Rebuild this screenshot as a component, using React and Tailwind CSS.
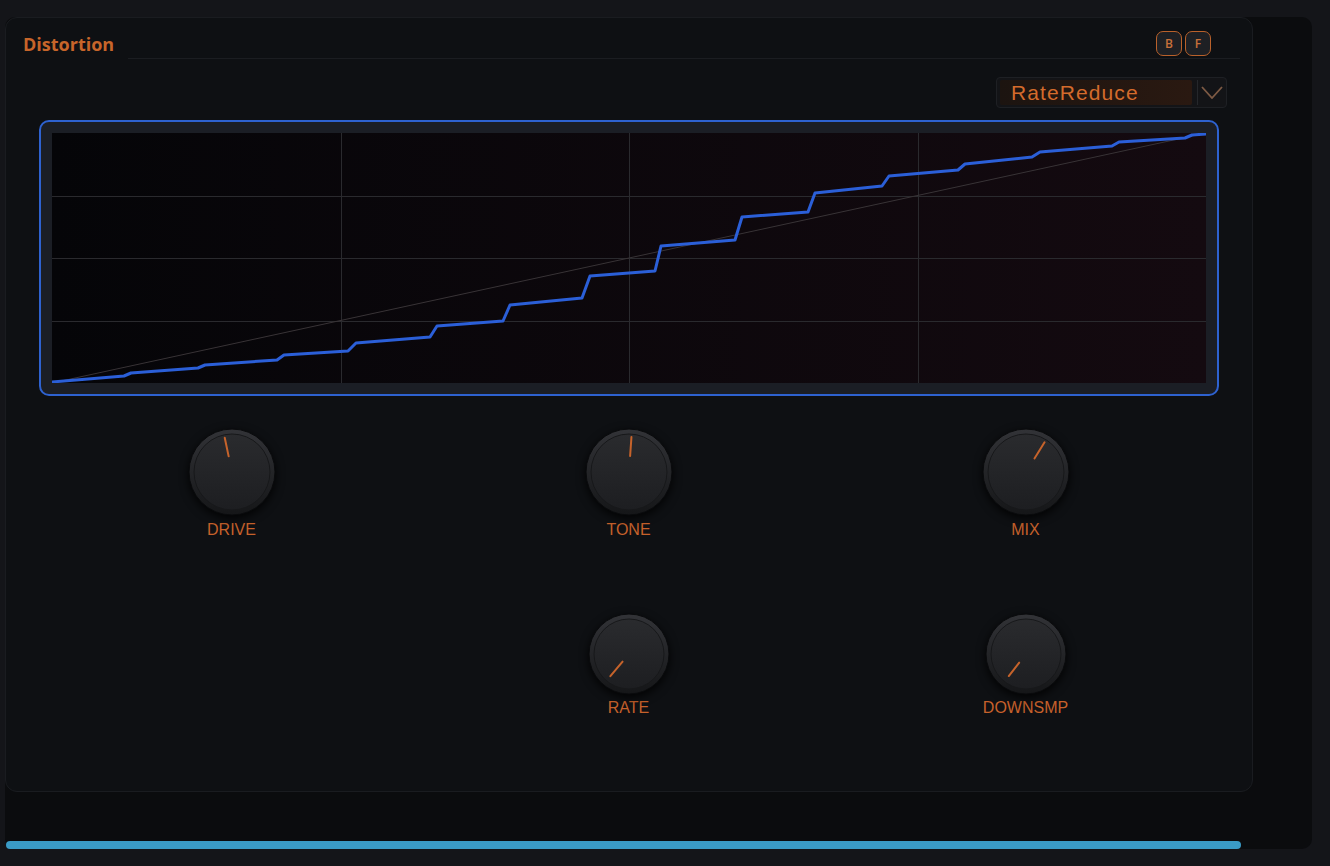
import React from 'react';

const ORANGE = '#c6632b';

// staircase transfer curve, in page pixels (plot starts at 52,133)
const STEPS = [
  [52, 382], [124, 376], [131, 373], [198, 368], [205, 365], [277, 360], [284, 355],
  [348, 351], [356, 343], [430, 337], [437, 326], [503, 321], [510, 305],
  [582, 298], [590, 276], [655, 271], [661, 246], [735, 240], [742, 217],
  [808, 212], [815, 193], [882, 186], [889, 176], [958, 170], [965, 164],
  [1032, 157], [1040, 152], [1112, 146], [1119, 142], [1185, 138], [1192, 135],
  [1206, 134],
];

const W = 1154;
const H = 250;

function TransferGraph() {
  const pts = STEPS.map(([x, y]) => `${x - 52},${y - 133}`).join(' ');
  return (
    <svg width={W} height={H} className="block">
      <defs>
        <linearGradient id="plotbg" x1="0" y1="0" x2="1" y2="0">
          <stop offset="0" stopColor="#050508" />
          <stop offset="1" stopColor="#140a10" />
        </linearGradient>
      </defs>
      <rect width={W} height={H} fill="url(#plotbg)" />
      {[1, 2, 3].map((i) => (
        <g key={i} stroke="#2a2a2e" strokeWidth="1">
          <line x1={Math.round((W * i) / 4) + 0.5} y1="0" x2={Math.round((W * i) / 4) + 0.5} y2={H} />
          <line x1="0" y1={Math.round((H * i) / 4) + 0.5} x2={W} y2={Math.round((H * i) / 4) + 0.5} />
        </g>
      ))}
      <line x1="0" y1={H} x2={W} y2="0" stroke="#383336" strokeWidth="1" />
      <polyline points={pts} fill="none" stroke="#2b5fd8" strokeWidth="3" strokeLinejoin="round" strokeLinecap="round" />
    </svg>
  );
}

function Knob({ id, size, angle, inner, outer }) {
  const c = size / 2;
  const r = c - 1;
  const a = (angle * Math.PI) / 180;
  const x1 = c + Math.sin(a) * inner;
  const y1 = c - Math.cos(a) * inner;
  const x2 = c + Math.sin(a) * outer;
  const y2 = c - Math.cos(a) * outer;
  return (
    <svg width={size} height={size} className="block overflow-visible drop-shadow-[0_3px_5px_rgba(0,0,0,0.85)]">
      <defs>
        <linearGradient id={`${id}-rim`} x1="0" y1="0" x2="0" y2="1">
          <stop offset="0" stopColor="#323337" />
          <stop offset="1" stopColor="#151618" />
        </linearGradient>
        <linearGradient id={`${id}-face`} x1="0" y1="0" x2="0" y2="1">
          <stop offset="0" stopColor="#2a2b2e" />
          <stop offset="1" stopColor="#1d1e21" />
        </linearGradient>
      </defs>
      <circle cx={c} cy={c} r={r} fill={`url(#${id}-rim)`} stroke="#0a0b0d" strokeWidth="1" />
      <circle cx={c} cy={c} r={r - 5} fill={`url(#${id}-face)`} stroke="#17181a" strokeWidth="1" />
      <line x1={x1} y1={y1} x2={x2} y2={y2} stroke={ORANGE} strokeWidth="2" strokeLinecap="round" />
    </svg>
  );
}

function KnobCell({ label, labelGap, ...knob }) {
  return (
    <div className="flex flex-col items-center">
      <Knob {...knob} />
      <span
        className={`${labelGap} text-[16px] leading-[16px] text-[#c6612b] font-['Liberation_Sans',Arial,sans-serif]`}
      >
        {label}
      </span>
    </div>
  );
}

export default function App() {
  return (
    <div className="w-[1330px] h-[866px] bg-[#141519] pt-[17px] pl-[5px] overflow-hidden">
      <div className="w-[1307px] h-[832px] bg-[#0b0c0e] rounded-[10px] flex flex-col">
        {/* Panel card */}
        <div className="w-[1248px] h-[775px] shrink-0 bg-[#0e1013] border border-[#1a1c20] rounded-[12px] flex flex-col">
          {/* Header */}
          <div className="h-[41px] flex items-end">
            <div className="w-[122px] pl-[17px] pb-[5px] text-[18px] leading-[20px] font-bold text-[#c7652a] font-['Open_Sans',sans-serif]">
              Distortion
            </div>
            <div className="flex-1 h-full mr-[12px] border-b border-[#1b1d21] flex items-end justify-end pr-[29px] pb-[2px] gap-[3px]">
              {['B', 'F'].map((l) => (
                <div
                  key={l}
                  className="w-[26px] h-[25px] rounded-[7px] border-[1.5px] border-[#b9612b] bg-[#1e2024] flex items-center justify-center text-[12px] font-semibold text-[#c8703a] font-['Open_Sans',sans-serif]"
                >
                  {l}
                </div>
              ))}
            </div>
          </div>

          {/* Mode dropdown */}
          <div className="mt-[18px] flex justify-end pr-[25px]">
            <div className="w-[231px] h-[31px] bg-[#131417] border border-[#1e2024] rounded-[4px] flex items-center pl-[3px]">
              <div className="w-[192px] h-[25px] rounded-[2px] bg-[linear-gradient(90deg,#1c1410,#2a1911)] pl-[11px] flex items-center text-[21px] leading-[25px] tracking-[1.1px] text-[#d46b2c] font-['Liberation_Sans',Arial,sans-serif]">
                RateReduce
              </div>
              <div className="ml-[5px] w-px h-[25px] bg-[#25272b]" />
              <div className="flex-1 flex items-center justify-center">
                <svg width="22" height="13" viewBox="0 0 22 13">
                  <path d="M1 1 L11 12 L21 1" fill="none" stroke="#7d5a44" strokeWidth="1.8" />
                </svg>
              </div>
            </div>
          </div>

          {/* Transfer graph */}
          <div className="mt-[12px] ml-[33px] w-[1180px] h-[276px] border-2 border-[#2e62d0] rounded-[10px] bg-[#1b1e25] p-[11px]">
            <TransferGraph />
          </div>

          {/* Knobs */}
          <div className="ml-[27px] mt-[32px] grid grid-cols-[397px_397px_397px]">
            <KnobCell id="drive" label="DRIVE" size={88} angle={-12} inner={16} outer={35} labelGap="mt-[6px]" />
            <KnobCell id="tone" label="TONE" size={88} angle={4} inner={16} outer={35} labelGap="mt-[6px]" />
            <KnobCell id="mix" label="MIX" size={88} angle={32} inner={16} outer={35} labelGap="mt-[6px]" />
          </div>
          <div className="ml-[27px] mt-[75px] grid grid-cols-[397px_397px_397px]">
            <div />
            <KnobCell id="rate" label="RATE" size={82} angle={-140} inner={10} outer={29} labelGap="mt-[5px]" />
            <KnobCell id="downsmp" label="DOWNSMP" size={82} angle={-142} inner={11} outer={28} labelGap="mt-[5px]" />
          </div>
        </div>

        {/* Scroll bar */}
        <div className="mt-[49px] ml-[1px] w-[1235px] h-[8px] rounded-full bg-[#3a9bc6]" />
      </div>
    </div>
  );
}
